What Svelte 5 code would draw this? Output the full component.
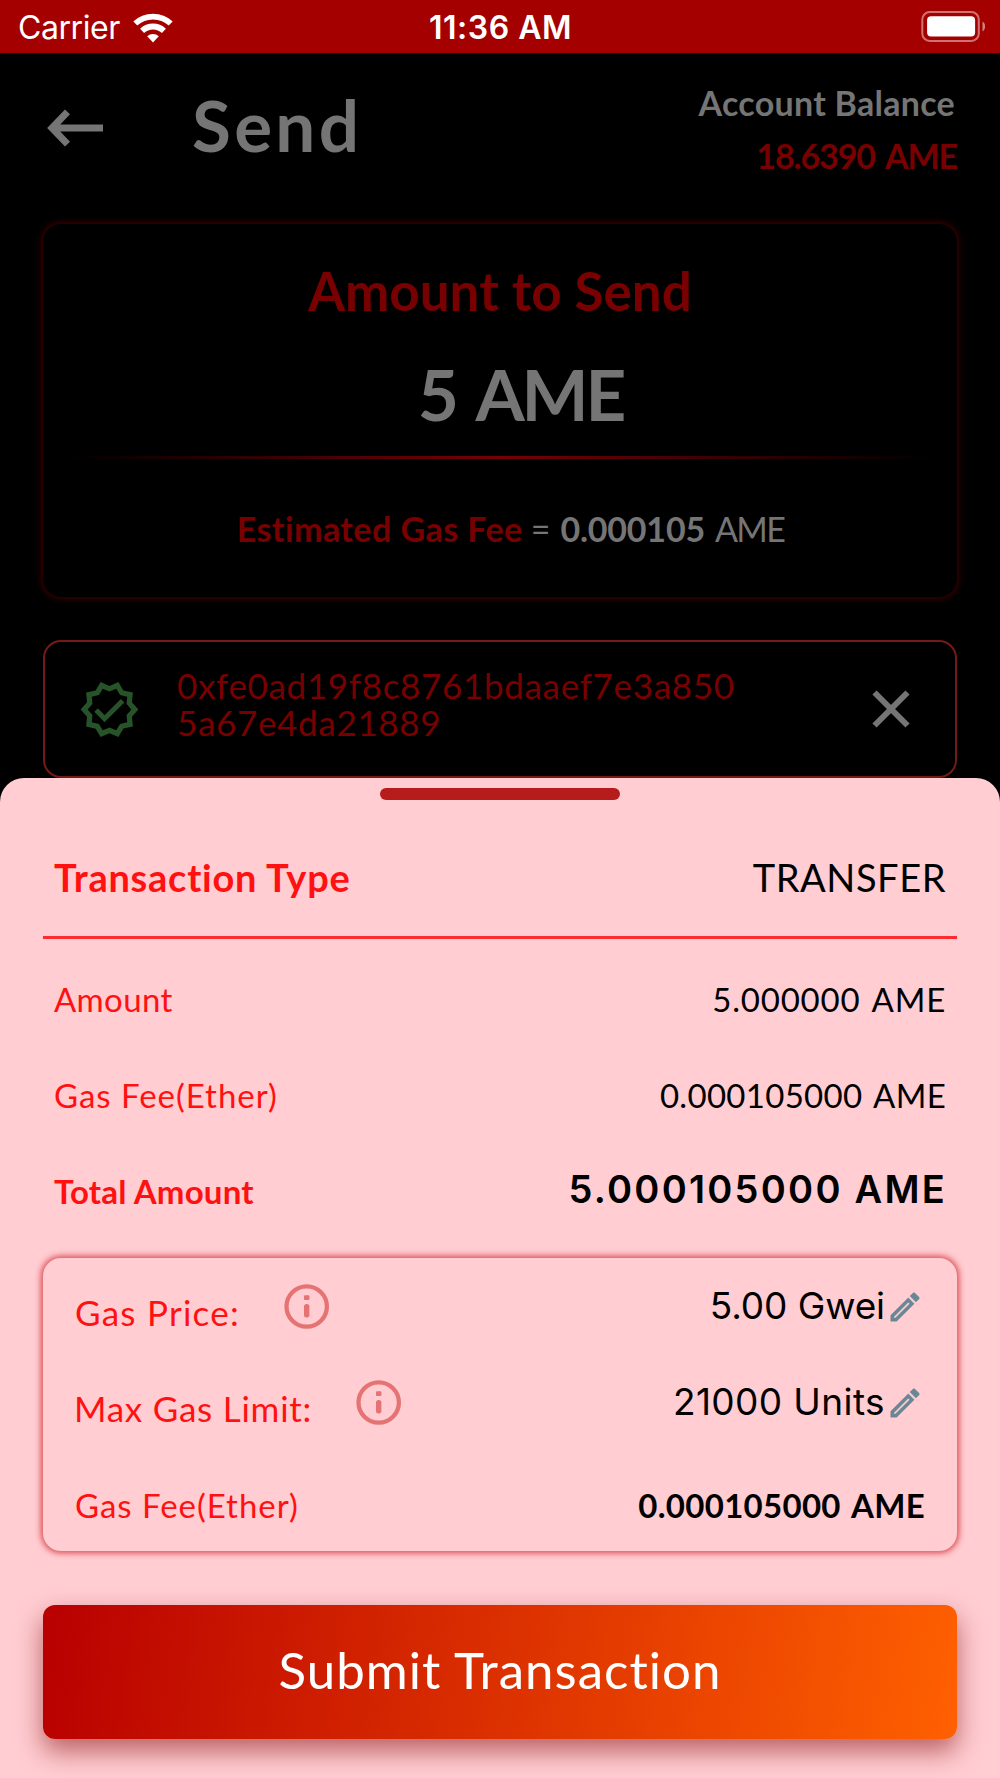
<script lang="ts">
	interface Row {
		label: string;
		value: string;
		total?: boolean;
	}

	let balance = $state('18.6390 AME');
	let amount = $state('5 AME');
	let gasFee = $state('0.000105');
	let addressLines = $state(['0xfe0ad19f8c8761bdaaef7e3a850', '5a67e4da21889']);

	const summary: Row[] = [
		{ label: 'Amount', value: '5.000000 AME' },
		{ label: 'Gas Fee(Ether)', value: '0.000105000 AME' },
		{ label: 'Total Amount', value: '5.000105000 AME', total: true }
	];

	const gasSettings: Row[] = [
		{ label: 'Gas Price:', value: '5.00 Gwei' },
		{ label: 'Max Gas Limit:', value: '21000 Units' }
	];
</script>

<div class="screen">
	<div class="status-bar">
		<div class="carrier">
			<span>Carrier</span>
			<svg width="40" height="30" viewBox="0 0 40 30" fill="none" stroke="#fff" stroke-width="5.8">
				<path d="M2.3 10.5A26 26 0 0 1 37.7 10.5M9.1 17.8A16 16 0 0 1 30.9 17.8" />
				<path d="M20 29.5L14.2 23.3A8.5 8.5 0 0 1 25.8 23.3Z" fill="#fff" stroke="none" />
			</svg>
		</div>
		<span class="time">11:36 AM</span>
		<div class="battery">
			<svg width="65" height="32" viewBox="0 0 65 32">
				<rect x="2.3" y="1" width="56.5" height="29" rx="7.5" fill="none" stroke="#fff" stroke-opacity=".45" stroke-width="2" />
				<rect x="7.1" y="5.3" width="48" height="20.2" rx="4" fill="#fff" />
				<path d="M62.5 10.5C66 12.5 66 18.5 62.5 20.5Z" fill="#fff" fill-opacity=".5" />
			</svg>
		</div>
	</div>

	<header>
		<svg class="back" width="56" height="38" viewBox="0 0 56 38" fill="none" stroke="#757575" stroke-width="7">
			<path d="M20.5 2.8L5 19L20.5 35.2M5 19H56" />
		</svg>
		<h1>Send</h1>
		<div class="balance">
			<span class="balance-label">Account Balance</span>
			<span class="balance-value">{balance}</span>
		</div>
	</header>

	<section class="amount-card">
		<h2>Amount to Send</h2>
		<div class="amount">{amount}</div>
		<div class="fade-line"></div>
		<div class="estimate">
			<span class="estimate-label">Estimated Gas Fee</span>
			<span class="equals">=</span>
			<b>{gasFee}</b>
			<span class="unit">AME</span>
		</div>
	</section>

	<section class="address">
		<svg class="verified" width="63" height="63" viewBox="0 0 24 24" fill="#265428">
			<path
				d="M23 12l-2.44-2.78.34-3.68-3.61-.82-1.89-3.18L12 3 8.6 1.54 6.71 4.72l-3.61.81.34 3.68L1 12l2.44 2.78-.34 3.69 3.61.82 1.89 3.18L12 21l3.4 1.46 1.89-3.18 3.61-.82-.34-3.68L23 12zm-4.51 2.11l.26 2.79-2.74.62-1.43 2.41L12 18.82l-2.58 1.11-1.43-2.41-2.74-.62.26-2.8L3.66 12l1.85-2.12-.26-2.78 2.74-.61 1.43-2.41L12 5.18l2.58-1.11 1.43 2.41 2.74.62-.26 2.79L20.34 12l-1.85 2.11z"
			/>
			<path d="M6.9 12.2L10.1 15.5L17 8.7" fill="none" stroke="#265428" stroke-width="1.9" />
		</svg>
		<div class="hash">
			{#each addressLines as line (line)}
				<div>{line}</div>
			{/each}
		</div>
		<svg class="close" width="38" height="38" viewBox="0 0 38 38" stroke="#757575" stroke-width="6">
			<path d="M2.5 2.5L35.5 35.5M35.5 2.5L2.5 35.5" />
		</svg>
	</section>

	<section class="sheet">
		<div class="handle"></div>

		<div class="type-row">
			<strong>Transaction Type</strong>
			<span>TRANSFER</span>
		</div>

		<div class="summary">
			{#each summary as row (row.label)}
				<div class="row" class:total={row.total}>
					<span class="label">{row.label}</span>
					<span class="value">{row.value}</span>
				</div>
			{/each}
		</div>

		<div class="gas-box">
			{#each gasSettings as row (row.label)}
				<div class="setting">
					<span class="setting-label">{row.label}</span>
					<svg class="info" width="46" height="46" viewBox="0 0 46 46" fill="#e57373">
						<circle cx="22.7" cy="23.5" r="20.2" fill="none" stroke="#e57373" stroke-width="4.3" />
						<rect x="20" y="12.3" width="5.4" height="4.6" rx="1" />
						<rect x="20" y="21" width="5.4" height="13.6" rx="2.5" />
					</svg>
					<span class="setting-value">{row.value}</span>
					<svg width="38" height="38" viewBox="0 0 24 24" fill="#688895" stroke="#688895" stroke-width=".25">
						<path
							d="M14.06 9.02l.92.92L5.92 19H5v-.92l9.06-9.06M17.66 3c-.25 0-.51.1-.7.29l-1.83 1.83 3.75 3.75 1.83-1.83c.39-.39.39-1.02 0-1.41l-2.34-2.34c-.2-.2-.45-.29-.71-.29zm-3.6 3.19L3 17.25V21h3.75L17.81 9.94l-3.75-3.75z"
						/>
					</svg>
				</div>
			{/each}
			<div class="gas-total">
				<span>Gas Fee(Ether)</span>
				<b>0.000105000 AME</b>
			</div>
		</div>

		<button type="button">Submit Transaction</button>
	</section>
</div>

<style>
	:global(body) {
		margin: 0;
		background: #000;
	}

	.screen {
		width: 1000px;
		height: 1778px;
		overflow: hidden;
		display: flex;
		flex-direction: column;
		background: #000;
		font-family: 'Lato', sans-serif;
		font-variant-ligatures: none;
		white-space: nowrap;
	}

	svg {
		display: block;
		flex: none;
	}

	.status-bar {
		height: 53px;
		flex: none;
		box-sizing: border-box;
		padding: 0 15px 0 18px;
		display: grid;
		grid-template-columns: 1fr auto 1fr;
		align-items: center;
		background: #a50000;
		color: #fff;
		font-family: 'Inter', sans-serif;
		font-size: 32px;
		line-height: 55px;
	}

	.carrier {
		display: flex;
		align-items: center;
		gap: 13px;
		letter-spacing: -0.45px;
	}

	.time {
		margin-left: -2px;
		font-weight: 600;
		letter-spacing: 0.5px;
	}

	.battery {
		display: flex;
		justify-content: flex-end;
		margin-top: -2px;
	}

	header {
		height: 171px;
		flex: none;
		box-sizing: border-box;
		padding: 0 43px 0 47px;
		display: flex;
		align-items: flex-start;
		color: #757575;
	}

	.back {
		margin-top: 56px;
	}

	h1 {
		margin: 32px 0 0 89px;
		font-size: 71px;
		line-height: 80px;
		font-weight: 700;
		letter-spacing: 3.3px;
	}

	.balance {
		margin: 23px 0 0 auto;
		display: flex;
		flex-direction: column;
		align-items: flex-end;
		font-size: 34px;
		line-height: 53px;
		font-weight: 700;
	}

	.balance-label {
		margin-right: 2px;
		letter-spacing: 0.27px;
	}

	.balance-value {
		color: #780000;
		letter-spacing: -1.1px;
		word-spacing: 4px;
	}

	.amount-card {
		height: 373px;
		flex: none;
		box-sizing: border-box;
		margin: 0 43px;
		padding-top: 35px;
		border-radius: 18px;
		background: #000;
		box-shadow: 0 0 7px 1px #4a0000;
		text-align: center;
	}

	h2 {
		margin: 0;
		color: #780000;
		font-size: 53px;
		line-height: 64px;
		font-weight: 700;
	}

	.amount {
		margin-top: 31px;
		padding-left: 41px;
		color: #757575;
		font-size: 71px;
		line-height: 80px;
		font-weight: 700;
		letter-spacing: -3.2px;
		word-spacing: 8px;
	}

	.fade-line {
		height: 3px;
		margin: 22px 24px 0;
		background: linear-gradient(90deg, transparent, #780006, transparent);
	}

	.estimate {
		margin-top: 45px;
		padding-left: 21px;
		display: flex;
		justify-content: center;
		color: #757575;
		font-size: 34px;
		line-height: 50px;
	}

	.estimate-label {
		color: #780000;
		font-weight: 700;
		letter-spacing: 0.45px;
	}

	.equals {
		margin: 0 10px 0 8px;
	}

	.estimate b {
		letter-spacing: -0.2px;
	}

	.unit {
		margin-left: 10px;
		letter-spacing: -1.6px;
	}

	.address {
		height: 138px;
		flex: none;
		box-sizing: border-box;
		margin: 43px 43px 0;
		padding: 0 45px 0 33px;
		border: 2px solid #741b18;
		border-radius: 18px;
		display: flex;
		align-items: center;
	}

	.hash {
		margin: -10px 0 0 36px;
		color: #780000;
		font-size: 35px;
		line-height: 37px;
		letter-spacing: 0.67px;
	}

	.close {
		margin-left: auto;
	}

	.sheet {
		flex: 1;
		padding: 0 43px;
		border-radius: 24px 24px 0 0;
		background: #ffcdd2;
	}

	.handle {
		width: 240px;
		height: 12px;
		margin: 10px auto 0;
		border-radius: 6px;
		background: #b71c1c;
	}

	.type-row {
		height: 139px;
		box-sizing: border-box;
		padding: 17px 11px 0;
		display: flex;
		align-items: center;
		justify-content: space-between;
		border-bottom: 3px solid #ff2b2e;
		font-size: 38px;
	}

	.type-row strong {
		color: #ff1111;
		letter-spacing: 0.75px;
	}

	.type-row span {
		letter-spacing: 0.55px;
	}

	.summary {
		padding: 12px 11px 0;
	}

	.row {
		height: 96px;
		display: flex;
		align-items: center;
		justify-content: space-between;
		font-size: 33px;
	}

	.label {
		color: #ff1111;
		letter-spacing: 0.97px;
	}

	.row:first-child .label {
		letter-spacing: 0.35px;
	}

	.value {
		letter-spacing: 0.3px;
		word-spacing: 3px;
	}

	.row:first-child .value {
		letter-spacing: 0.8px;
	}

	.total .label {
		font-weight: 700;
		letter-spacing: 0.2px;
	}

	.total .value {
		margin: 0 -1px 5px 0;
		font-family: 'Inter', sans-serif;
		font-size: 38px;
		font-weight: 600;
		letter-spacing: 2.25px;
		word-spacing: 0;
	}

	.gas-box {
		height: 293px;
		box-sizing: border-box;
		margin-top: 19px;
		padding: 0 32px;
		border-radius: 18px;
		box-shadow: 0 0 6px 2px #d84a4f;
		background: #ffcdd2;
	}

	.setting {
		height: 96px;
		display: flex;
		align-items: center;
	}

	.setting-label {
		padding-top: 12px;
		color: #ff1111;
		font-size: 35px;
		letter-spacing: 1.25px;
	}

	.setting:nth-child(2) .setting-label {
		margin-left: -1px;
		letter-spacing: 0.75px;
	}

	.info {
		margin-left: 44px;
	}

	.setting-value {
		margin: 0 1px 1px auto;
		font-family: 'Inter', sans-serif;
		font-size: 37px;
		letter-spacing: -0.1px;
	}

	.setting:nth-child(2) .setting-value {
		letter-spacing: 0.4px;
	}

	.setting svg:last-child {
		margin: 1px 1px 0 0;
	}

	.gas-total {
		height: 100px;
		box-sizing: border-box;
		padding-top: 10px;
		display: flex;
		align-items: center;
		justify-content: space-between;
		font-size: 33px;
	}

	.gas-total span {
		color: #ff1111;
		letter-spacing: 0.97px;
	}

	.gas-total b {
		letter-spacing: 0.3px;
		word-spacing: 3px;
	}

	button {
		width: 914px;
		height: 134px;
		margin: 54px 0 0;
		padding: 0 0 6px;
		border: 0;
		border-radius: 12px;
		background: linear-gradient(98deg, #b80000, #ff6000);
		box-shadow: 0 12px 26px rgba(130, 10, 10, 0.55);
		color: #fff;
		font-family: inherit;
		font-size: 51px;
		letter-spacing: 1.04px;
	}
</style>
